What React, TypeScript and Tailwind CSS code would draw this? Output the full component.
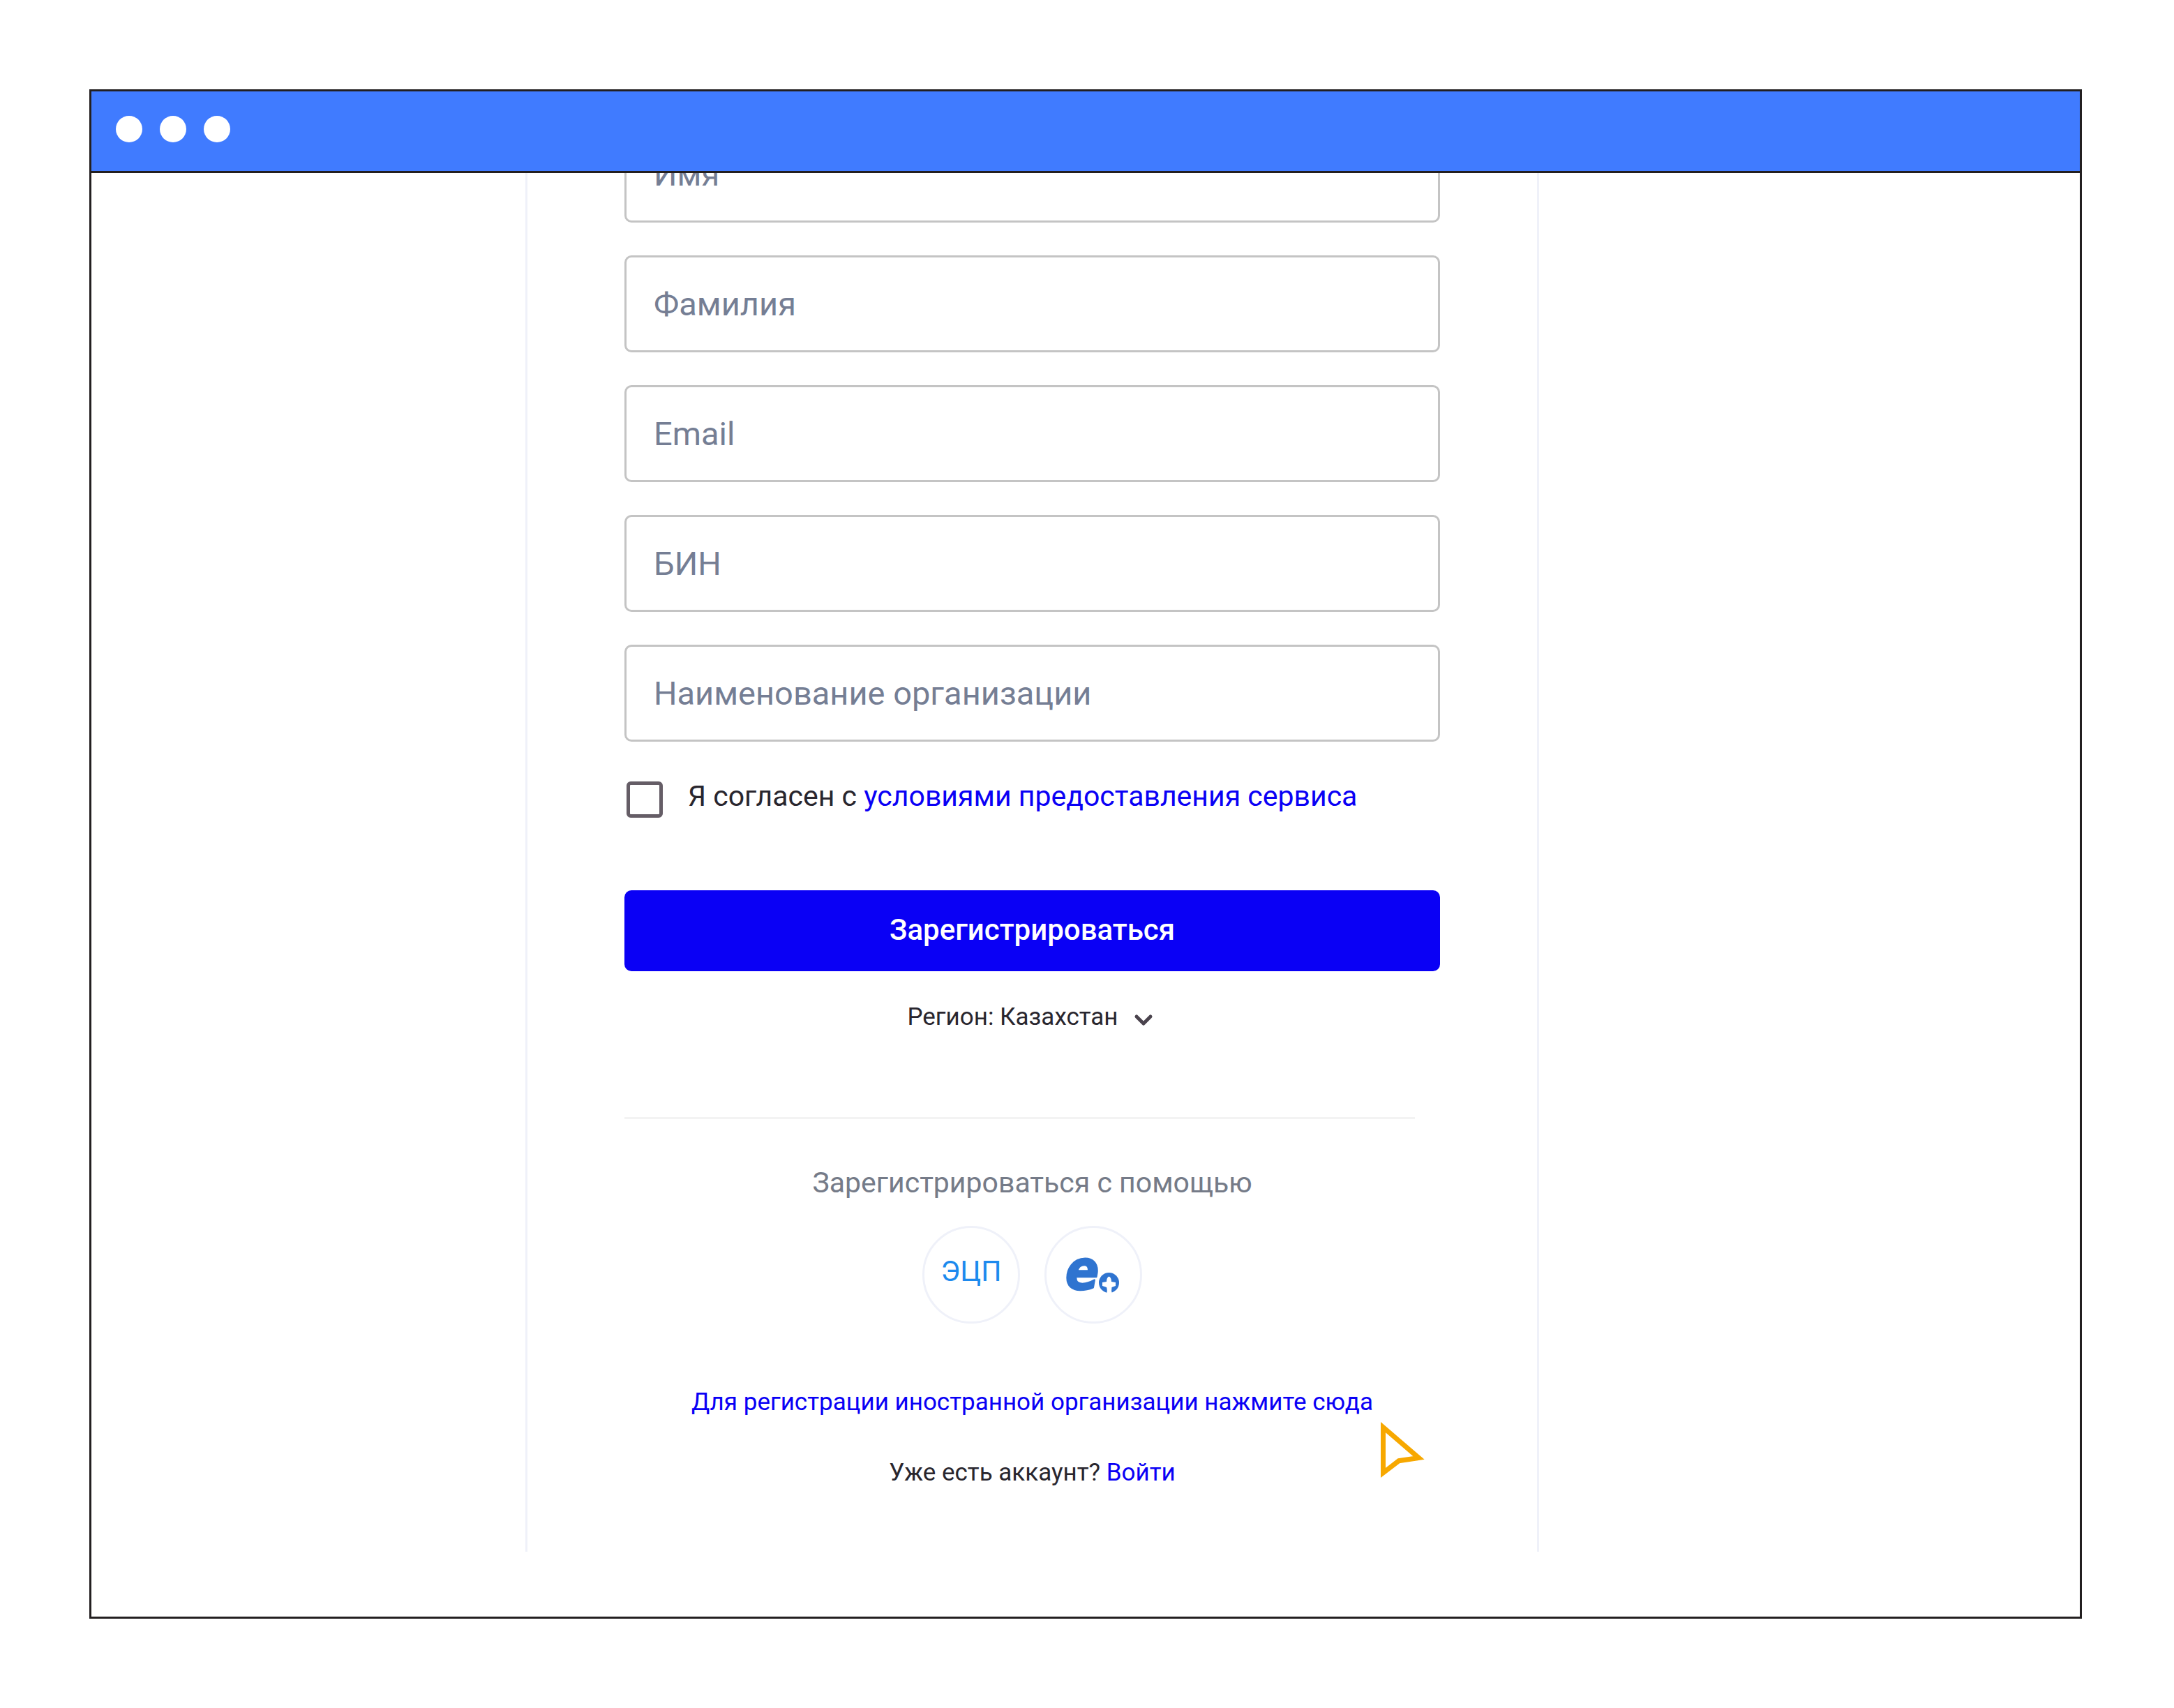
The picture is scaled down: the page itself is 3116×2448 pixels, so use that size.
import { ChevronDown } from "lucide-react";

const fields = [
  { id: "first-name", label: "Имя", type: "text" },
  { id: "last-name", label: "Фамилия", type: "text" },
  { id: "email", label: "Email", type: "email" },
  { id: "bin", label: "БИН", type: "text" },
  { id: "organization", label: "Наименование организации", type: "text" },
];

function TitleBar() {
  return (
    <header className="relative z-10 flex items-center gap-[25px] border-b-3 border-[#231f20] bg-[#407bff] px-[35px] pt-[35px] pb-[41px]">
      <span className="size-[38px] rounded-full bg-white" />
      <span className="size-[38px] rounded-full bg-white" />
      <span className="size-[38px] rounded-full bg-white" />
    </header>
  );
}

function EgovIcon() {
  return (
    <svg viewBox="0 0 134 134" className="size-full" aria-hidden="true">
      <text
        x="27"
        y="88"
        fill="#2f74d0"
        stroke="#2f74d0"
        strokeWidth="2.5"
        strokeLinejoin="round"
        fontFamily="'DejaVu Sans Condensed', 'DejaVu Sans', sans-serif"
        fontSize="79"
        fontWeight="700"
        fontStyle="italic"
      >
        e
      </text>
      <circle cx="89.5" cy="78.5" r="14.5" fill="#2f74d0" />
      <path
        d="M89.5 69.5 Q93 71 93 77 L99 78 V83 L93.5 85 Q92.5 89 94 95 H86 Q87.5 89 86 85 L80 83 V78 L86 77 Q86 71 89.5 69.5 Z"
        fill="#fff"
      />
    </svg>
  );
}

function Pointer() {
  return (
    <svg
      viewBox="0 0 64 82"
      className="pointer-events-none absolute top-[58px] right-[21px] h-[82px] w-[64px]"
      aria-hidden="true"
    >
      <path
        d="M3.5 7.7 V73 L26 55.7 L54.5 51.5 Z"
        fill="#fff"
        stroke="#f7a800"
        strokeWidth="7"
        strokeMiterlimit="10"
      />
    </svg>
  );
}

export default function App() {
  return (
    <div className="bg-white py-32 pr-[132px] pl-32 font-[Roboto,sans-serif] text-[#29262e]">
      <div className="overflow-hidden border-3 border-[#231f20] bg-white">
        <TitleBar />

        <main className="flex justify-center pr-[153px] pb-[93px]">
          {/* The form is scrolled a little under the title bar */}
          <form
            className="-mt-[68px] flex w-full max-w-[1453px] flex-col border-x-3 border-[#eff1f9] px-[139px] pb-[83px]"
            onSubmit={(e) => e.preventDefault()}
          >
            <div className="flex flex-col gap-[47px]">
              {fields.map((field) => (
                <input
                  key={field.id}
                  id={field.id}
                  type={field.type}
                  aria-label={field.label}
                  placeholder={field.label}
                  className="h-[139px] w-full rounded-[10px] border-3 border-[#c4c4c4] bg-white px-[39px] text-[47px] placeholder:text-[#757e94]"
                />
              ))}
            </div>

            <div className="mt-[47px] flex items-center gap-9 pl-[3px]">
              <input
                id="terms"
                type="checkbox"
                className="mt-[10px] size-[52px] shrink-0 appearance-none rounded-md border-5 border-[#655d66] bg-white checked:bg-[#0a00f5]"
              />
              <label htmlFor="terms" className="text-[41px] leading-[60px]">
                Я согласен с{" "}
                <a href="#terms" className="text-[#0a00f5]">
                  условиями предоставления сервиса
                </a>
              </label>
            </div>

            <button
              type="submit"
              className="mt-[104px] h-[116px] rounded-[10px] bg-[#0a00f5] pb-1 text-[42px] font-medium text-white"
            >
              Зарегистрироваться
            </button>

            <button
              type="button"
              className="mt-9 flex items-center justify-center gap-4 text-[35px] leading-[60px]"
            >
              Регион: Казахстан
              <ChevronDown className="mt-2 size-10 text-[#4a434d]" strokeWidth={3} />
            </button>

            <hr className="mt-[113px] mr-9 border-t-3 border-[#f3f3f3]" />

            <p className="mt-[61px] text-center text-[41px] leading-[60px] text-[#757b88]">
              Зарегистрироваться с помощью
            </p>
            <div className="mt-8 flex justify-center gap-[35px]">
              <button
                type="button"
                className="size-[140px] rounded-full border-3 border-[#eff1f9] pb-[9px] text-[41px] text-[#1d8aee]"
              >
                ЭЦП
              </button>
              <button
                type="button"
                aria-label="eGov"
                className="size-[140px] rounded-full border-3 border-[#eff1f9]"
              >
                <EgovIcon />
              </button>
            </div>

            <div className="relative mt-[83px] text-center text-[35px] leading-[60px]">
              <a href="#foreign" className="text-[#0a00f5]">
                Для регистрации иностранной организации нажмите сюда
              </a>
              <Pointer />
            </div>
            <p className="mt-[41px] text-center text-[35px] leading-[60px]">
              Уже есть аккаунт?{" "}
              <a href="#login" className="text-[#0a00f5]">
                Войти
              </a>
            </p>
          </form>
        </main>
      </div>
    </div>
  );
}
